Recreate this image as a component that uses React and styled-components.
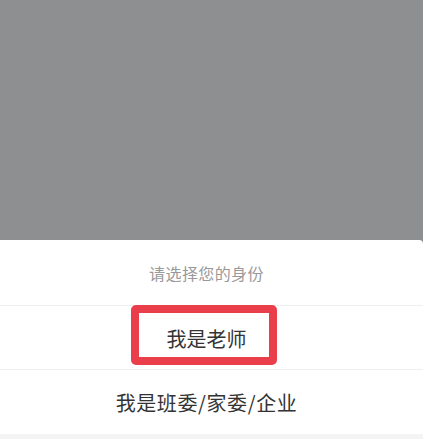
import React from "react";
import styled, { createGlobalStyle } from "styled-components";

const GlobalStyle = createGlobalStyle`
  html, body {
    margin: 0;
    padding: 0;
    height: 100%;
  }
  body {
    font-family: "Noto Sans CJK SC", "Noto Sans", sans-serif;
    overflow: hidden;
  }
  #root {
    height: 100%;
  }
`;

const Page = styled.div`
  height: 100vh;
  display: flex;
  flex-direction: column;
  background: #8e8f91;
`;

const Mask = styled.div`
  flex: 1;
  background: #8e8f91;
`;

const Sheet = styled.div`
  background: #ffffff;
  border-radius: 0 4px 0 0;
  display: flex;
  flex-direction: column;
`;

const Title = styled.div`
  height: 65px;
  display: flex;
  align-items: center;
  justify-content: center;
  padding-right: 10px;
  font-size: 16px;
  letter-spacing: 0.4px;
  color: #999999;
  border-bottom: 1px solid #efefef;
`;

const Option = styled.div`
  position: relative;
  height: 64px;
  display: flex;
  align-items: center;
  justify-content: center;
  padding-right: 10px;
  font-size: 20px;
  letter-spacing: ${(props) => (props.last ? "0.6px" : "0")};
  color: #333333;
  border-bottom: ${(props) => (props.last ? "none" : "1px solid #efefef")};
  padding-top: ${(props) => (props.last ? "1px" : "2px")};
  box-sizing: border-box;
`;

const Mark = styled.div`
  position: absolute;
  left: 131px;
  top: -1px;
  width: 146px;
  height: 60px;
  box-sizing: border-box;
  border: 8px solid #ea3f4b;
  border-radius: 5px;
  pointer-events: none;
`;

const Footer = styled.div`
  height: 5px;
  background: #f4f4f4;
`;

function App() {
  return (
    <Page>
      <GlobalStyle />
      <Mask />
      <Sheet>
        <Title>请选择您的身份</Title>
        <Option>
          我是老师
          <Mark />
        </Option>
        <Option last>我是班委/家委/企业</Option>
        <Footer />
      </Sheet>
    </Page>
  );
}

export default App;
